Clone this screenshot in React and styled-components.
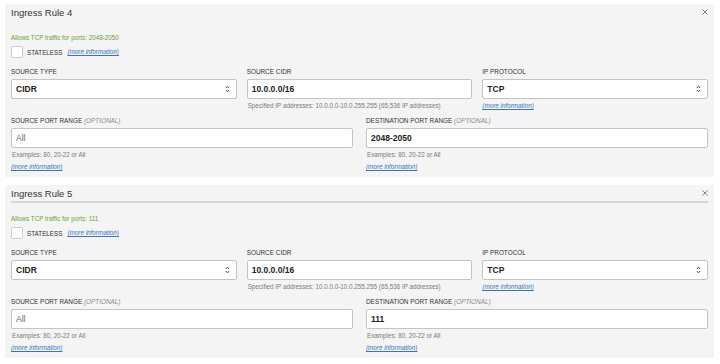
import React from 'react';
import styled, { createGlobalStyle } from 'styled-components';

const GlobalStyle = createGlobalStyle`
  body {
    margin: 0;
    background: #ffffff;
    font-family: 'Liberation Sans', Arial, sans-serif;
    color: #333333;
  }
`;

const Page = styled.div`
  display: flex;
  flex-direction: column;
  gap: 8px;
  padding: 4px 6px 0 5px;
`;

const Panel = styled.section`
  background: #f4f4f4;
  padding: 0 6px 6px;
`;

const Header = styled.div`
  display: flex;
  justify-content: space-between;
  align-items: center;
  height: 16px;
  border-bottom: 2px solid ${(p) => (p.$underline ? '#d6d6d6' : 'transparent')};
`;

const Title = styled.h3`
  margin: 0;
  font-size: 9.5px;
  font-weight: normal;
  color: #333333;
`;

const Close = styled.button`
  border: 0;
  padding: 0;
  background: none;
  width: 6px;
  height: 6px;
  display: flex;
  cursor: pointer;
`;

const Allows = styled.div`
  margin-top: 12px;
  font-size: 6.3px;
  line-height: 8px;
  color: #6f9f3c;
`;

const CheckRow = styled.div`
  display: flex;
  align-items: center;
  margin-top: 4px;
  height: 12px;
  font-size: 6.3px;
`;

const Checkbox = styled.span`
  width: 12px;
  height: 12px;
  box-sizing: border-box;
  background: #ffffff;
  border: 1px solid #cccccc;
  border-radius: 2px;
  margin-right: 4px;
`;

const CheckLabel = styled.span`
  color: #333333;
  margin-right: 5px;
`;

const MoreInfo = styled.a`
  font-size: 6.3px;
  line-height: 8px;
  font-style: italic;
  color: #3b73b9;
  text-decoration: underline;
  cursor: pointer;
`;

const Grid = styled.div`
  display: grid;
  grid-template-columns: ${(p) => (p.$cols === 3 ? 'repeat(3, 1fr)' : '1fr 1fr')};
  column-gap: ${(p) => (p.$cols === 3 ? '10px' : '13px')};
  margin-top: ${(p) => p.$top}px;
`;

const Field = styled.div`
  display: flex;
  flex-direction: column;
  align-items: flex-start;
  min-width: 0;
`;

const Label = styled.label`
  font-size: 6.4px;
  line-height: 8px;
  text-transform: uppercase;
  color: #333333;
  margin-bottom: 3px;
`;

const Optional = styled.span`
  font-style: italic;
  color: #8a8a8a;
`;

const TextInput = styled.input`
  width: 100%;
  height: 20px;
  box-sizing: border-box;
  border: 1px solid #c4c4c4;
  border-radius: 2px;
  background: #ffffff;
  padding: 0 4px;
  font-family: 'Liberation Sans', Arial, sans-serif;
  font-size: 8.5px;
  font-weight: ${(p) => (p.$muted ? 'normal' : 'bold')};
  color: ${(p) => (p.$muted ? '#666666' : '#222222')};
  outline: none;
`;

const SelectBox = styled.div`
  width: 100%;
  height: 20px;
  box-sizing: border-box;
  display: flex;
  align-items: center;
  justify-content: space-between;
  border: 1px solid #c4c4c4;
  border-radius: 2px;
  background: #ffffff;
  padding: 0 6px 0 4px;
  font-size: 8.5px;
  font-weight: bold;
  color: #222222;
`;

const Help = styled.div`
  font-size: 6.3px;
  line-height: 8px;
  color: #7a7a7a;
  margin-top: 3px;
  padding-left: 1px;
`;

const Below = styled.div`
  margin-top: ${(p) => p.$top || 3}px;
  display: flex;
`;

const Arrows = () => (
  <svg width="5" height="8" viewBox="0 0 5 8" fill="none" stroke="#333" strokeWidth="0.9">
    <path d="M0.8 3 L2.5 1.2 L4.2 3" />
    <path d="M0.8 5 L2.5 6.8 L4.2 5" />
  </svg>
);

const CloseIcon = () => (
  <svg width="6" height="6" viewBox="0 0 6 6" stroke="#777" strokeWidth="0.9">
    <path d="M0.5 0.5 L5.5 5.5 M5.5 0.5 L0.5 5.5" />
  </svg>
);

const Select = ({ value }) => (
  <SelectBox>
    <span>{value}</span>
    <Arrows />
  </SelectBox>
);

const rules = [
  { n: 4, ports: '2048-2050', underline: false },
  { n: 5, ports: '111', underline: true },
];

const Rule = ({ n, ports, underline }) => (
  <Panel>
    <Header $underline={underline}>
      <Title>Ingress Rule {n}</Title>
      <Close aria-label="remove">
        <CloseIcon />
      </Close>
    </Header>
    <Allows>Allows TCP traffic for ports: {ports}</Allows>
    <CheckRow>
      <Checkbox />
      <CheckLabel>STATELESS</CheckLabel>
      <MoreInfo>(more information)</MoreInfo>
    </CheckRow>

    <Grid $cols={3} $top={10}>
      <Field>
        <Label>Source Type</Label>
        <Select value="CIDR" />
      </Field>
      <Field>
        <Label>Source CIDR</Label>
        <TextInput readOnly value="10.0.0.0/16" />
        <Help>Specified IP addresses: 10.0.0.0-10.0.255.255 (65,536 IP addresses)</Help>
      </Field>
      <Field>
        <Label>IP Protocol</Label>
        <Select value="TCP" />
        <Below>
          <MoreInfo>(more information)</MoreInfo>
        </Below>
      </Field>
    </Grid>

    <Grid $cols={2} $top={7}>
      <Field>
        <Label>
          Source Port Range <Optional>(OPTIONAL)</Optional>
        </Label>
        <TextInput readOnly value="All" $muted />
        <Help>Examples: 80, 20-22 or All</Help>
        <Below $top={4}>
          <MoreInfo>(more information)</MoreInfo>
        </Below>
      </Field>
      <Field>
        <Label>
          Destination Port Range <Optional>(OPTIONAL)</Optional>
        </Label>
        <TextInput readOnly value={ports} />
        <Help>Examples: 80, 20-22 or All</Help>
        <Below $top={4}>
          <MoreInfo>(more information)</MoreInfo>
        </Below>
      </Field>
    </Grid>
  </Panel>
);

const App = () => (
  <>
    <GlobalStyle />
    <Page>
      {rules.map((r) => (
        <Rule key={r.n} {...r} />
      ))}
    </Page>
  </>
);

export default App;
